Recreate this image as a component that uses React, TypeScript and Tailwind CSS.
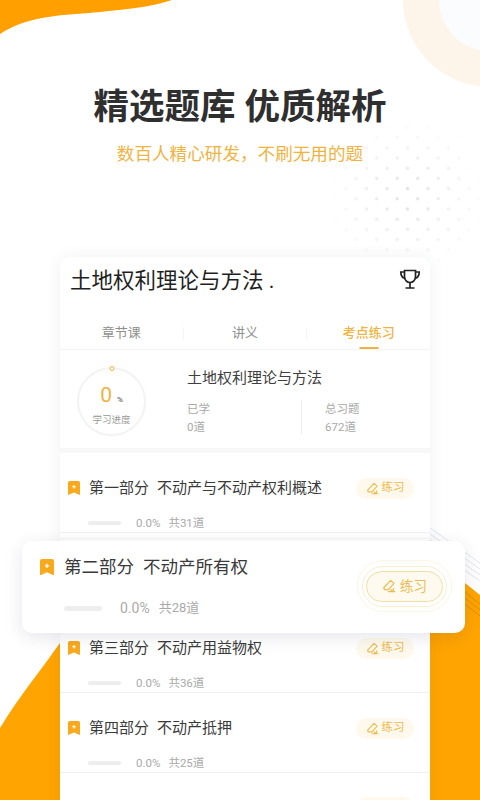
const cjk = { fontFamily: '"Roboto", "Noto Sans CJK SC", sans-serif' };

function Bookmark({ size }: { size: number }) {
  return (
    <svg width={size} height={size * 1.17} viewBox="0 0 12 14" className="shrink-0">
      <path d="M1.8 0h8.4A1.8 1.8 0 0 1 12 1.8V13.4a.5.5 0 0 1-.7.4L6 11.4.7 13.8a.5.5 0 0 1-.7-.4V1.8A1.8 1.8 0 0 1 1.8 0z" fill="#f9a91c" />
      <path d="M6 4v3.6M4.2 5.8h3.6" stroke="#fff" strokeWidth="1.1" />
    </svg>
  );
}

function Pen({ size }: { size: number }) {
  return (
    <svg width={size} height={size} viewBox="0 0 14 14" fill="none" stroke="#ecbc52" strokeWidth="1.2" className="shrink-0">
      <path d="M8.6 1.4l3.4 3-5.6 6.2H2.6L1.6 9z" strokeLinejoin="round" />
      <path d="M6.4 12.6h6.4M11.4 9.6a1.4 1.4 0 1 1-2.6 1" strokeLinecap="round" />
    </svg>
  );
}

function Pill() {
  return (
    <div className="flex h-[21px] w-[58px] items-center justify-center gap-[3px] rounded-full bg-[#fef9ec] text-[11.5px] text-[#ecbc52]">
      <Pen size={13} />
      练习
    </div>
  );
}

const rows = [
  { part: '第一部分', name: '不动产与不动产权利概述', total: '共31道' },
  { part: '第二部分', name: '不动产所有权', total: '' },
  { part: '第三部分', name: '不动产用益物权', total: '共36道' },
  { part: '第四部分', name: '不动产抵押', total: '共25道' },
];

function Row({ part, name, total }: { part: string; name: string; total: string }) {
  // row 2 sits under the floating card, only its top lines show
  if (!total) {
    return (
      <div className="h-[80px] border-b border-[#f1f1f3] pt-[5px]">
        <div className="border-t border-[#f5f5f7]" />
      </div>
    );
  }
  return (
    <div className="h-[80px] border-b border-[#f1f1f3]">
      <div className="flex items-center pl-[8px] pr-[16px] pt-[21px]">
        <Bookmark size={12} />
        <div className="ml-[9px] flex flex-1 text-[15px] leading-[28px] text-[#3a3a3a]">
          <span>{part}</span>
          <span className="ml-[8px]">{name}</span>
        </div>
        <Pill />
      </div>
      <div className="mt-[13px] flex items-center pl-[28px] text-[11.5px] leading-[16px] text-[#a9a9a9]">
        <div className="h-[4px] w-[33px] rounded-full bg-[#eeeeee]" />
        <span className="ml-[15px]">0.0%</span>
        <span className="ml-[8px]">{total}</span>
      </div>
    </div>
  );
}

export default function App() {
  return (
    <div className="relative h-[800px] w-[480px] overflow-hidden bg-white" style={cjk}>
      {/* background shapes */}
      <svg width="480" height="800" viewBox="0 0 480 800" className="absolute inset-0">
        <path d="M0 34C30 14 70 15 100 12 130 9 155 6 172 0H0z" fill="#ff9f00" />
        <circle cx="490" cy="0" r="87" fill="#fdf5e9" />
        <circle cx="490" cy="0" r="51" fill="#fbfcfe" />
        <path d="M0 728C20 695 45 665 62 640V800H0z" fill="#ffa400" />
        <path d="M430 555L480 595V800H430z" fill="#ffa400" />
        <path d="M460 588l20 16M460 594l20 16M460 600l20 16" stroke="#e08e00" strokeWidth="1" />
        <path d="M430 528l50 35M430 534l50 35M430 540l50 35M430 546l50 35" stroke="#e3e6ee" strokeWidth="1" />
        {Array.from({ length: 17 }).flatMap((_, r) =>
          Array.from({ length: 12 }).map((_, c) => {
            const x = 264 + c * 20.5 + (r % 2 ? 10.25 : 0);
            const y = 107 + r * 10.2;
            const o = Math.max(0, 0.7 - Math.hypot(x - 407, y - 197) / 115);
            return <circle key={`${r}-${c}`} cx={x} cy={y} r="1.8" fill="#d6d6d6" opacity={o} />;
          })
        )}
      </svg>

      <div className="relative flex flex-col items-center">
        <h1 className="mt-[83px] whitespace-pre text-[35.5px] font-bold leading-[48px] text-[#2f2f2f]">精选题库 优质解析</h1>
        <p className="mt-[10px] text-[17.6px] leading-[26px] text-[#efb33f]">数百人精心研发，不刷无用的题</p>
      </div>

      {/* main card */}
      <div className="absolute left-[60px] top-[257px] w-[370px] rounded-t-[10px] bg-white shadow-[0_0_16px_rgba(40,50,90,0.07)]">
        <div className="flex h-[44px] items-center justify-between pl-[10px] pr-[9px] pt-[4px]">
          <span className="text-[21.5px] text-[#1f1f1f]">土地权利理论与方法 .</span>
          <svg width="22" height="22" viewBox="0 0 22 22" fill="none" stroke="#222" strokeWidth="1.7" className="mb-[5px]">
            <path d="M5.5 2.5h11v6.5a5.5 5.5 0 0 1-11 0z" />
            <path d="M5.5 4H1.8c0 4 1.4 5.8 4.4 6.4M16.5 4h3.7c0 4-1.4 5.8-4.4 6.4M11 14.5v5M6.5 20h9" />
          </svg>
        </div>
        <div className="mt-[14px] flex h-[35px] border-b border-[#f3f3f3] text-[13px] text-[#8f8f8f]">
          <div className="flex flex-1 justify-center pt-[8px]">章节课</div>
          <div className="mt-[12px] h-[13px] w-px bg-[#f4f4f4]" />
          <div className="flex flex-1 justify-center pt-[8px]">讲义</div>
          <div className="mt-[12px] h-[13px] w-px bg-[#f4f4f4]" />
          <div className="relative flex flex-1 justify-center pt-[8px] font-medium text-[#efb33f]">
            考点练习
            <span className="absolute bottom-0 left-1/2 h-[2px] w-[19px] -translate-x-1/2 bg-[#efb33f]" />
          </div>
        </div>
        <div className="flex h-[103px] border-b-[5px] border-[#f7f7f7]">
          <div className="relative ml-[17px] mt-[17px] flex h-[69px] w-[69px] flex-col items-center rounded-full border-2 border-[#f3f3f3]">
            <span className="absolute -top-[3px] left-1/2 h-[5px] w-[5px] -translate-x-1/2 rounded-full border border-[#f0b03c] bg-white" />
            <div className="mt-[14px] flex items-baseline leading-[24px]">
              <span className="text-[21px] text-[#efb33f]">0</span>
              <span className="ml-[5px] text-[8px] font-bold text-[#777]">%</span>
            </div>
            <span className="mt-[2px] text-[9.5px] leading-[12px] text-[#9a9a9a]">学习进度</span>
          </div>
          <div className="ml-[41px] flex-1 pt-[17px]">
            <div className="text-[15px] leading-[22px] text-[#3f3f3f]">土地权利理论与方法</div>
            <div className="mt-[11px] flex text-[11.5px] leading-[18px] text-[#a9a9a9]">
              <div className="h-[34px] w-[115px] border-r border-[#eeeeee]">
                <div>已学</div>
                <div>0道</div>
              </div>
              <div className="ml-[23px]">
                <div>总习题</div>
                <div>672道</div>
              </div>
            </div>
          </div>
        </div>
        <div>
          {rows.map((r) => (
            <Row key={r.part} {...r} />
          ))}
          {/* next row, only the top of its button is on screen */}
          <div className="flex justify-end pr-[16px] pt-[24px]">
            <div className="h-[21px] w-[58px] rounded-full bg-[#fef9ec]" />
          </div>
        </div>
      </div>

      {/* floating row */}
      <div className="absolute left-[22px] top-[541px] h-[92px] w-[443px] rounded-[10px] bg-white shadow-[0_4px_18px_rgba(40,50,90,0.12)]">
        <div className="flex items-center pl-[18px] pt-[11px]">
          <Bookmark size={14} />
          <span className="ml-[10px] text-[17.5px] leading-[30px] text-[#3a3a3a]">第二部分</span>
          <span className="ml-[9px] text-[17.5px] leading-[30px] text-[#3a3a3a]">不动产所有权</span>
        </div>
        <div className="mt-[16px] flex items-center pl-[42px] text-[13px] leading-[20px] text-[#a9a9a9]">
          <div className="h-[5px] w-[38px] rounded-full bg-[#eeeeee]" />
          <span className="ml-[18px] text-[14px]">0.0%</span>
          <span className="ml-[9px]">共28道</span>
        </div>
        <div className="absolute left-[335px] top-[19px] flex h-[52px] w-[95px] items-center justify-center rounded-full border border-[#fcf6e6]">
          <div className="flex h-[41px] w-[85px] items-center justify-center rounded-full border border-[#f9eecd]">
            <div className="flex h-[31px] w-[77px] items-center justify-center gap-[4px] rounded-full border border-[#f3dd9f] bg-[#fefaf0] text-[13.5px] text-[#ecbc52]">
              <Pen size={14} />
              练习
            </div>
          </div>
        </div>
      </div>
    </div>
  );
}
